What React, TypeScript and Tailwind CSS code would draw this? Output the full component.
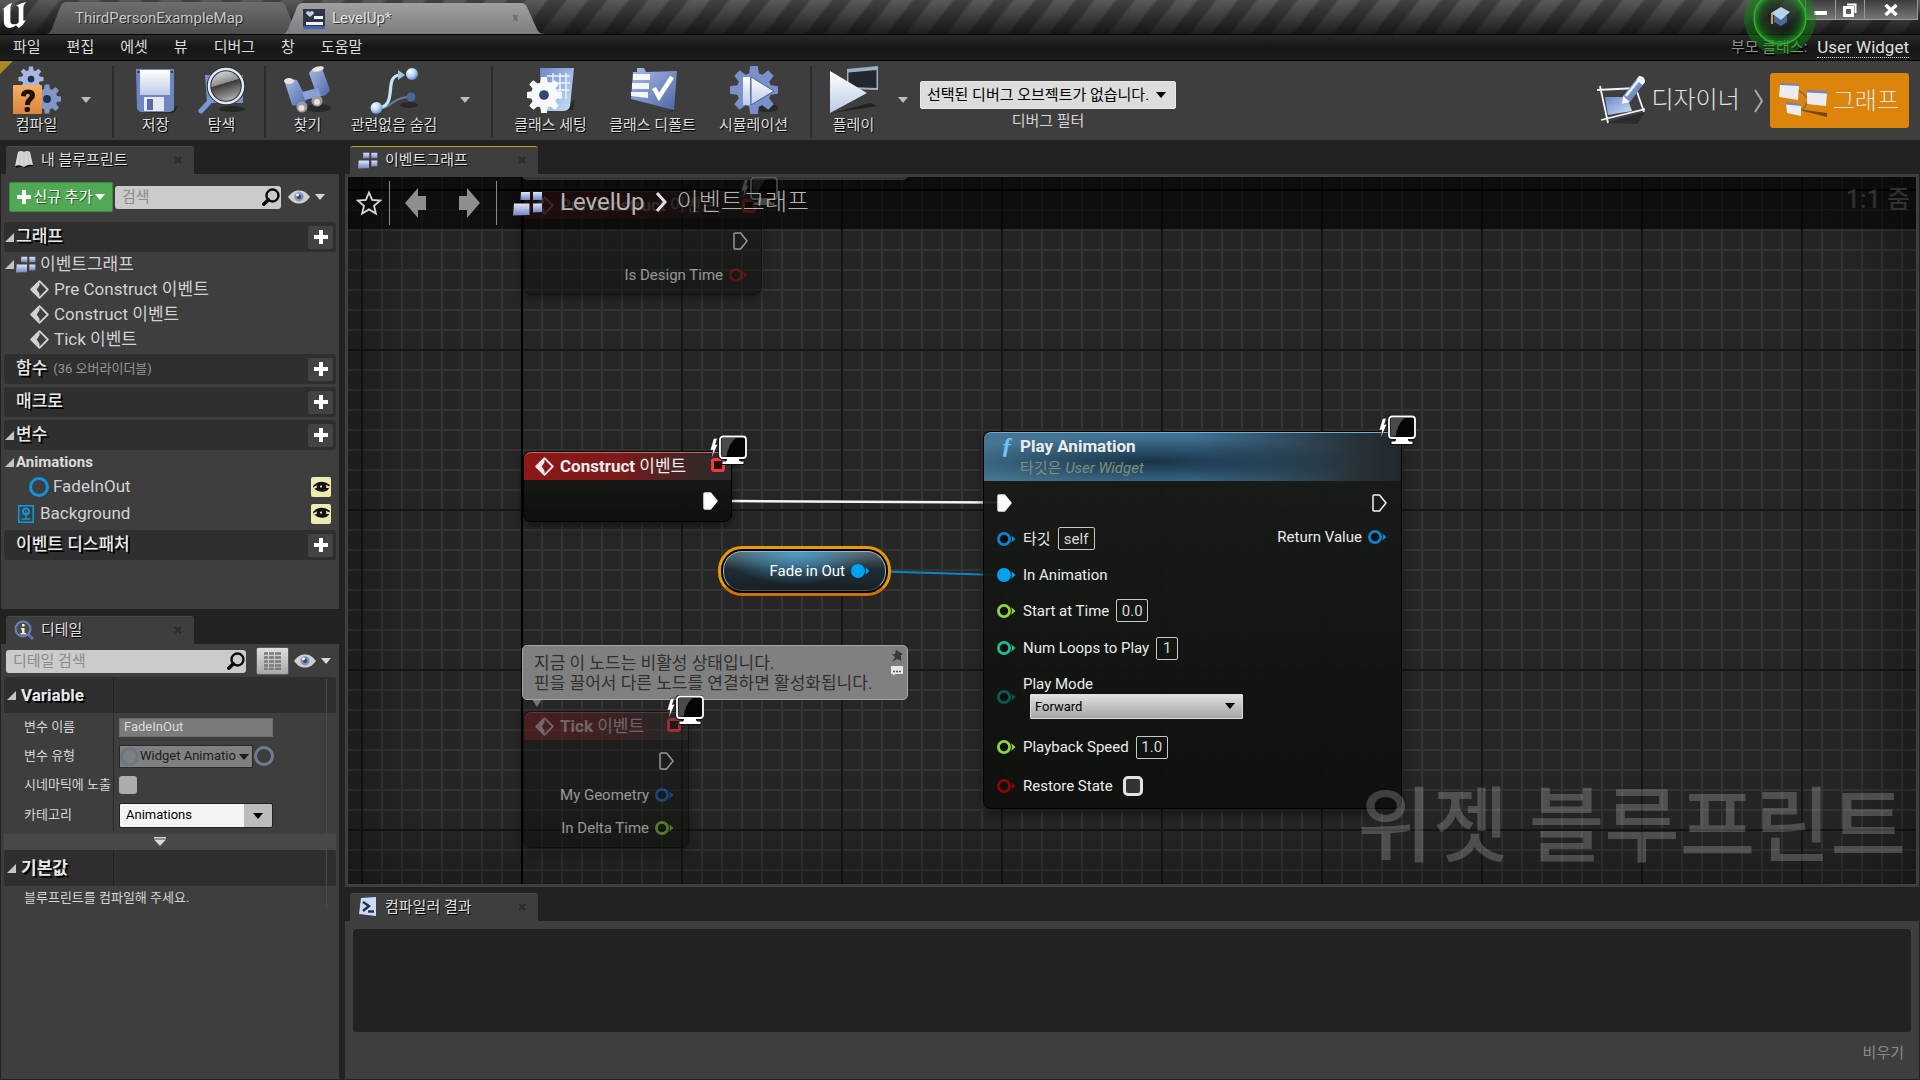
import type { ReactNode } from "react";
import { clsx } from "clsx";

/* ---------- small shared drawings ---------- */

const Caret = ({ className }: { className?: string }) => (
  <svg viewBox="0 0 12 7" className={clsx("h-[6px] w-[10px] shrink-0", className)} fill="currentColor">
    <path d="M0 0h12L6 7z" />
  </svg>
);

const Expander = ({ className }: { className?: string }) => (
  <svg viewBox="0 0 9 9" className={clsx("size-[9px] shrink-0 text-[#c4c4c4]", className)} fill="currentColor">
    <path d="M9 0v9H0z" />
  </svg>
);

const Plus = () => (
  <svg viewBox="0 0 14 14" className="size-[14px] shrink-0" fill="currentColor">
    <path d="M5 0h4v5h5v4H9v5H5V9H0V5h5z" />
  </svg>
);

const Magnifier = () => (
  <svg viewBox="0 0 18 18" className="size-[18px] shrink-0" fill="none" stroke="#0a0a0a">
    <circle cx="10.5" cy="7.5" r="6" strokeWidth="2.4" />
    <path d="M6.4 11.8 1.8 16.2" strokeWidth="3.6" strokeLinecap="round" />
  </svg>
);

const Eye = () => (
  <svg viewBox="0 0 22 14" className="h-[14px] w-[22px] shrink-0">
    <path d="M0 7C4 1.5 7.5 .5 11 .5S18 1.5 22 7c-4 5.5-7.5 6.5-11 6.5S4 12.5 0 7z" fill="#cfcfcf" />
    <circle cx="11" cy="6.8" r="4.6" fill="#7e93b8" />
    <circle cx="11" cy="6.8" r="2.2" fill="#34466c" />
    <circle cx="9.5" cy="4.8" r="1.6" fill="#e8eefa" />
  </svg>
);

const GraphIcon = ({ className }: { className?: string }) => (
  <svg viewBox="0 0 30 25" className={clsx("shrink-0", className)}>
    <defs>
      <linearGradient id="graphBlue" x1="0" y1="0" x2="0" y2="1">
        <stop offset="0" stopColor="#dfe6fa" />
        <stop offset="1" stopColor="#7484bd" />
      </linearGradient>
    </defs>
    <g fill="url(#graphBlue)">
      <path d="M8 1h9v8H7.5z" />
      <path d="M20 1h9v8h-9z" />
      <path d="M1 12.5h15.5V24L0 24.5z" />
      <path d="M20 12.5h9v8.5l-9 .5z" />
    </g>
  </svg>
);

const EventDiamond = () => (
  <svg viewBox="0 0 19 19" className="size-[19px] shrink-0" fill="none" stroke="currentColor">
    <path d="M9.5 1.2 17.8 9.5 9.5 17.8 1.2 9.5z" strokeWidth="1.8" strokeLinejoin="round" />
    <path d="M9.5 1.2 1.2 9.5l8.3 8.3v-4L6.8 9.5l2.7-4.3z" fill="currentColor" stroke="none" />
  </svg>
);

const ExecPin = ({ filled }: { filled?: boolean }) => (
  <svg viewBox="0 0 15 18" className="h-[18px] w-[15px] shrink-0">
    <path
      d="M2 1h5.5L14 9l-6.5 8H2q-1 0-1-1V2q0-1 1-1z"
      fill={filled ? "#fff" : "none"}
      stroke="#f2f2f2"
      strokeWidth="1.5"
      strokeLinejoin="round"
    />
  </svg>
);

const DataPin = ({ color, filled }: { color: string; filled?: boolean }) => (
  <svg viewBox="0 0 19 14" className="h-[14px] w-[19px] shrink-0">
    <circle cx="7" cy="7" r="5.6" fill={filled ? color : "#0b0f0d"} stroke={color} strokeWidth="2.8" />
    <path d="M14.3 3.2 18.5 7l-4.2 3.8q1.3-3.8 0-7.6z" fill={color} />
  </svg>
);

const Monitor = () => (
  <svg viewBox="0 0 38 33" className="h-[33px] w-[38px]">
    <path d="M4.5 4.5 8.5 4 6.5 10.5l2.5-.5L2.5 25l1.3-9L1 16.5z" fill="#fff" stroke="#111" strokeWidth=".6" />
    <rect x="9.5" y="1" width="28.5" height="25" rx="4" fill="#111" />
    <path d="M18 24h12l1 3h4v3.5H13V27h4z" fill="#fff" stroke="#111" />
    <rect x="11" y="2.5" width="26" height="21.5" rx="3" fill="#050505" stroke="#fff" strokeWidth="1.8" />
    <path d="M12.5 4h14Q19 11 17.5 22.5h-5z" fill="#4a4a4a" />
  </svg>
);

const Delegate = ({ className }: { className?: string }) => (
  <span className={clsx("block size-[14px] rounded-[3px] border-[3px] border-[#f0383a] bg-[#2a0708]", className)} />
);

const Gear = ({ cx, cy, r, fill, hole = "#20304f" }: { cx: number; cy: number; r: number; fill: string; hole?: string }) => (
  <g fill={fill}>
    {[0, 45, 90, 135].map((a) => (
      <path
        key={a}
        d={`M${cx - r * 0.16} ${cy - r}h${r * 0.32}l${r * 0.14} ${r}l${-r * 0.14} ${r}h${-r * 0.32}l${-r * 0.14} ${-r}z`}
        transform={`rotate(${a} ${cx} ${cy})`}
      />
    ))}
    <circle cx={cx} cy={cy} r={r * 0.72} />
    <circle cx={cx} cy={cy} r={r * 0.27} fill={hole} />
  </g>
);

/* ---------- toolbar drawings ---------- */

const Defs = () => (
  <svg className="absolute size-0" aria-hidden="true">
    <defs>
      <linearGradient id="steel" x1="0" y1="0" x2="1" y2="1">
        <stop offset="0" stopColor="#a9bce8" />
        <stop offset="1" stopColor="#4f66a3" />
      </linearGradient>
      <linearGradient id="pale" x1="0" y1="0" x2="0" y2="1">
        <stop offset="0" stopColor="#ffffff" />
        <stop offset="1" stopColor="#bccbe6" />
      </linearGradient>
      <linearGradient id="ice" x1="0" y1="0" x2="1" y2="1">
        <stop offset="0" stopColor="#6f86c9" />
        <stop offset="1" stopColor="#c9e6f7" />
      </linearGradient>
      <linearGradient id="orange" x1="0" y1="0" x2="0" y2="1">
        <stop offset="0" stopColor="#f7ad63" />
        <stop offset="1" stopColor="#d9853c" />
      </linearGradient>
      <linearGradient id="glass" x1="0" y1="0" x2=".3" y2="1">
        <stop offset="0" stopColor="#f4f4f4" />
        <stop offset=".5" stopColor="#8d8d8d" />
        <stop offset=".52" stopColor="#3a3a3a" />
        <stop offset="1" stopColor="#a9a9a9" />
      </linearGradient>
      <radialGradient id="ball" cx=".35" cy=".3" r=".8">
        <stop offset="0" stopColor="#ffffff" />
        <stop offset=".5" stopColor="#b5d8f5" />
        <stop offset="1" stopColor="#4c74b8" />
      </radialGradient>
    </defs>
  </svg>
);

const Drawing = ({ children }: { children: ReactNode }) => (
  <svg viewBox="0 0 48 48" className="size-12 shrink-0">
    {children}
  </svg>
);

const CompileDrawing = () => (
  <Drawing>
    <Gear cx={18} cy={13} r={12.5} fill="#a6b8e2" />
    <Gear cx={34} cy={33} r={14.5} fill="#8496c8" />
    <rect x="0" y="19" width="29" height="29" rx="1" fill="url(#orange)" />
    <path d="M8 30q0-6.5 7-6.5t7 6q0 3-3 5.2-2 1.5-2 4.3h-5q0-4.5 2.5-6.5 2.3-1.8 2.3-3 0-1.7-1.9-1.7-2 0-2.2 2.6z" fill="#1a1209" />
    <rect x="11.5" y="41" width="5.5" height="5" rx="2" fill="#1a1209" />
  </Drawing>
);

const SaveDrawing = () => (
  <Drawing>
    <path d="M30 44 46 40l-4 7H14z" fill="#1c1c1c" opacity=".6" />
    <path d="M4 3h38v41l-4 2H8l-3-3z" fill="#6f86bf" />
    <path d="M8 4h30v25H8z" fill="url(#pale)" />
    <path d="M12 31h20v14H12z" fill="#e4e8ef" />
    <path d="M15 33h6v11h-6z" fill="#566ca6" />
    <circle cx="6.5" cy="6" r="1" fill="#223" />
    <circle cx="40" cy="6" r="1" fill="#223" />
  </Drawing>
);

const BrowseDrawing = () => (
  <Drawing>
    <ellipse cx="34" cy="43" rx="13" ry="3" fill="#111" opacity=".5" />
    <path d="M7 9h38v28H9z" fill="#7c90c6" />
    <path d="M14 33 3 45" stroke="#7d96d6" strokeWidth="5" strokeLinecap="round" />
    <circle cx="28" cy="20" r="17" fill="url(#glass)" stroke="#2a2f3b" strokeWidth="4.5" />
    <circle cx="28" cy="20" r="17" fill="none" stroke="#e2e8f4" strokeWidth="2.5" />
  </Drawing>
);

const FindDrawing = () => (
  <Drawing>
    <ellipse cx="34" cy="42" rx="13" ry="4" fill="#111" opacity=".5" />
    <path d="M25 7q5-8 13-5l8 22q-4 8-13 6z" fill="url(#steel)" />
    <path d="M1 17q5-5 12-3l10 20q-6 8-15 5z" fill="url(#steel)" />
    <path d="M18 26 34 22l3 8-16 4z" fill="#8aa0d8" />
    <ellipse cx="5" cy="15" rx="5" ry="3" fill="#e9e3da" />
    <ellipse cx="34" cy="3" rx="6" ry="2.5" fill="#e9e3da" transform="rotate(-14 34 3)" />
    <circle cx="18" cy="41" r="5.5" fill="#9d99a0" />
    <circle cx="17.5" cy="42" r="3" fill="#e5e0d8" />
    <circle cx="33" cy="35" r="5.5" fill="#9d99a0" />
    <circle cx="33" cy="36" r="3" fill="#e5e0d8" />
  </Drawing>
);

const HideDrawing = () => (
  <Drawing>
    <ellipse cx="39" cy="39" rx="9" ry="3" fill="#111" opacity=".5" />
    <path d="M6 42c16 2 14-10 32-11" fill="none" stroke="#6b7b95" strokeWidth="2" />
    <path d="M6 42C30 42 12 10 30 9" fill="none" stroke="#c5e6f5" strokeWidth="3.2" />
    <path d="m28 4 7 5-7 5z" fill="#9fc4de" />
    <circle cx="42" cy="8" r="6" fill="url(#ball)" />
    <circle cx="6.5" cy="42" r="6" fill="url(#ball)" />
    <circle cx="41" cy="31" r="4.5" fill="#4a64a0" />
  </Drawing>
);

const SettingsDrawing = () => (
  <Drawing>
    <path d="M28 44h18l2-10z" fill="#111" opacity=".5" />
    <path d="M13 2h34l-4 38q-1 5-8 5H14z" fill="url(#ice)" />
    <path d="M20 10h23M20 17h23M19 24h23M26 7v26M33 7v26M39 7v26" stroke="#e8f3ff" strokeWidth="1.5" />
    <Gear cx={17} cy={29} r={18} fill="#f7f9fc" hole="#34466e" />
  </Drawing>
);

const DefaultsDrawing = () => (
  <Drawing>
    <path d="M2 36 40 47l6-3L38 46z" fill="#111" opacity=".5" />
    <path d="M8 2h7l2 4 31-1-3 39L2 33 4 6h4z" fill="url(#steel)" />
    <path d="M4 8h17v6H4zM3 17h17v6H3zM2 26h17v6L2 30z" fill="#f3f6fb" />
    <path d="m25 22 5 9L43 11" fill="none" stroke="#fff" strokeWidth="4.5" />
  </Drawing>
);

const SimulateDrawing = () => (
  <Drawing>
    <ellipse cx="36" cy="42" rx="13" ry="4" fill="#111" opacity=".5" />
    <Gear cx={24} cy={24} r={24} fill="#7b90cb" hole="#5d74b0" />
    <path d="M13 11h7v28h-7z" fill="url(#pale)" />
    <path d="M21 11l23 14-23 14z" fill="url(#pale)" stroke="#4a5f95" />
  </Drawing>
);

const PlayDrawing = () => (
  <Drawing>
    <path d="M2 47 48 40l-8-3z" fill="#111" opacity=".6" />
    <path d="M17 3 48 0v24l-31-1z" fill="#9bb0c8" />
    <path d="M18.5 6.5 46.5 4v18l-28-1z" fill="#23262c" />
    <path d="M0 5 37 27 0 47z" fill="url(#pale)" />
  </Drawing>
);

const DesignerDrawing = () => (
  <Drawing>
    <path d="M8 47 48 36l-8 12z" fill="#111" opacity=".4" />
    <path d="M8 21h22l5 14-24 4z" fill="url(#ice)" />
    <path d="M0 14 40 12M3 10l8 37M4 44l44-11M38 10l9 26" stroke="#f2f4f8" strokeWidth="1.8" />
    <path d="M42 0q6 0 6 6L33 26l-8 2 1-8z" fill="url(#steel)" />
    <path d="M42 0q6 0 6 6l-2.5 3-6-5zM26 20l7 6-8 2z" fill="#f5f8fd" />
    <path d="M29 20 41 5" stroke="#e6effc" strokeWidth="2.5" />
  </Drawing>
);

const GraphDrawing = () => (
  <Drawing>
    <g transform="translate(0 5)">
      <path d="M2 22 18 27l30 4v4L28 30z" fill="#5c3602" opacity=".8" />
      <path d="M18 8q8 4 10 8M18 30q8-2 10-10" fill="none" stroke="#8b6a3c" strokeWidth="1.5" />
      <path d="M1 2l19 1-1 15L0 15z" fill="#ececf0" />
      <path d="M1 1l19 1v2L1 3z" fill="#7485b4" />
      <path d="M28 9l20 1-1 14-19-2z" fill="#ececf0" />
      <path d="M28 8l20 1v2.5L28 10.5z" fill="#7485b4" />
      <path d="M7 21l15 2v11L8 31z" fill="#ececf0" />
      <path d="M7 20l15 2v2L7 22.5z" fill="#7485b4" />
    </g>
  </Drawing>
);

/* ---------- window frame ---------- */

const TabShape = ({ from, to }: { from: string; to: string }) => (
  <svg viewBox="0 0 264 32" preserveAspectRatio="none" className="absolute inset-0 size-full">
    <defs>
      <linearGradient id={`tab${from.slice(1)}`} x1="0" y1="0" x2="0" y2="1">
        <stop offset="0" stopColor={from} />
        <stop offset="1" stopColor={to} />
      </linearGradient>
    </defs>
    <path
      d="M0 32Q5 32 7 27L16 4q1.5-4 6-4H240q4.5 0 6 4l10 23q2 5 8 5z"
      fill={`url(#tab${from.slice(1)})`}
    />
  </svg>
);

const TitleBar = () => (
  <header className="relative flex h-[34px] items-end bg-[linear-gradient(to_bottom,#5a5a5a,#1e1e1e)]">
    <div className="absolute inset-0 bg-[repeating-linear-gradient(128deg,transparent_0px,transparent_14px,rgba(0,0,0,.28)_17px,rgba(0,0,0,.28)_29px,transparent_32px)]" />
    <svg viewBox="0 0 28 30" className="relative mb-1 ml-[2px] h-[28px] w-[26px]" fill="#fff">
      <path d="M1 8Q6 2 11 1 9 4 9 7v13q0 4 4 4 3 0 5-2V7q0-3-3-3 5-3 11-4-3 3-3 6v13q0 2 3 0-3 6-8 9l-3-3q-3 3-7 3-6 0-6-7V9q0-3-2-1z" />
    </svg>
    <button className="relative ml-[17px] flex h-[32px] w-[258px] items-center pl-[30px] text-[15px] text-[#c8c8c8] [text-shadow:1px_1px_0_#222]">
      <TabShape from="#6e6e6e" to="#4c4c4c" />
      <span className="relative">ThirdPersonExampleMap</span>
    </button>
    <button className="relative -ml-[22px] flex h-[31px] w-[264px] items-center gap-[7px] pr-[27px] pl-[22px] text-[15px] text-[#e4e4e4] [text-shadow:1px_1px_0_#333]">
      <TabShape from="#a0a0a0" to="#7d7d7d" />
      <svg viewBox="0 0 22 20" className="relative h-[20px] w-[22px]">
        <path d="M0 0h22v20H0z" fill="#2c3446" />
        <path d="M0 17h22v3H0z" fill="#3f63b0" />
        <path d="M7 8 3 4.5Q3 2 5 2t2 1.5Q7 2 9 2t2 2.5z" fill="#c9ced8" />
        <path d="M11 7h9v3h-9zM3 13h17v3H3z" fill="#eef1f6" />
      </svg>
      <span className="relative grow text-left">LevelUp*</span>
      <span className="relative text-[11px] font-bold text-[#686868] [text-shadow:none]">x</span>
    </button>
    <div className="relative mr-[2px] ml-auto flex self-start border border-t-0 border-[#999] bg-[linear-gradient(to_bottom,#3c3c3c,#777)]">
      <button aria-label="minimize" className="flex h-[19px] w-[30px] items-center justify-center border-r border-[#999]">
        <span className="mt-[6px] h-[4px] w-[13px] bg-white" />
      </button>
      <button aria-label="restore" className="flex h-[19px] w-[29px] items-center justify-center border-r border-[#999]">
        <svg viewBox="0 0 14 14" className="size-[14px]" fill="none" stroke="#fff">
          <path d="M4 1.5h8.5v8.5" strokeWidth="2" />
          <rect x="1.5" y="4.5" width="8" height="8" strokeWidth="3" />
        </svg>
      </button>
      <button aria-label="close" className="flex h-[19px] w-[52px] items-center justify-center">
        <svg viewBox="0 0 14 12" className="h-[12px] w-[14px]" stroke="#fff" strokeWidth="3.5">
          <path d="M1.5 1l11 10M12.5 1l-11 10" />
        </svg>
      </button>
    </div>
    <svg viewBox="0 0 72 72" className="absolute -top-[18px] right-[104px] z-10 size-[72px]">
      <defs>
        <radialGradient id="glow">
          <stop offset=".4" stopColor="#0c1a0c" stopOpacity=".35" />
          <stop offset=".75" stopColor="#105c12" stopOpacity=".55" />
          <stop offset="1" stopColor="#1fa51f" stopOpacity=".8" />
        </radialGradient>
      </defs>
      <path d="M36 0a36 36 0 1 0 .01 0zM36 10a26 26 0 1 1-.01 0z" fillRule="evenodd" fill="#0f8a12" opacity=".45" />
      <circle cx="36" cy="36" r="26" fill="url(#glow)" stroke="#29b229" strokeWidth="1.5" />
      <path d="M30 34v6l7 4 6-4v-6z" fill="#4c6893" />
      <path d="M27 31 37 25l9 5-9 8z" fill="#b4d2ee" />
      <path d="M28 31v11" stroke="#c79a63" strokeWidth="2" />
    </svg>
  </header>
);

const menus = ["파일", "편집", "에셋", "뷰", "디버그", "창", "도움말"];

const MenuBar = () => (
  <nav className="flex h-[27px] items-center border-y border-black bg-[linear-gradient(to_bottom,#2a2a2a,#161616_50%,#1d1d1d)] text-[15px] text-[#dcdcdc]">
    {menus.map((menu) => (
      <button key={menu} className="px-[13px]">
        {menu}
      </button>
    ))}
    <span className="ml-auto pr-[10px] text-[#8f8f8f] [text-shadow:1px_2px_0_#000]">부모 클래스:</span>
    <a href="#parent" className="mr-[11px] border-b border-dotted border-[#ddd] text-[17px] leading-[20px] text-[#e0e0e0]">
      User Widget
    </a>
  </nav>
);

const ToolButton = ({ label, icon, width = "w-[65px]" }: { label: string; icon: ReactNode; width?: string }) => (
  <button className={clsx("flex flex-col items-center text-[15px] leading-[22px] text-[#dedede]", width)}>
    {icon}
    <span className="whitespace-nowrap [text-shadow:1px_1px_0_#000]">{label}</span>
  </button>
);

const ToolMenu = ({ label }: { label: string }) => (
  <button aria-label={label} className="flex w-[34px] items-center justify-center pb-[6px] text-[#bdbdbd]">
    <Caret />
  </button>
);

const Separator = () => <span className="mx-[9px] mb-[3px] w-[2px] bg-[#2c2c2c]" />;

const Toolbar = () => (
  <div className="relative flex h-[79px] bg-[#3e3e3e] pt-[2px] pl-1">
    <svg viewBox="0 0 14 14" className="absolute top-0 left-0 size-[13px]">
      <path d="M0 0h14L0 14z" fill="#a98a1e" />
    </svg>
    <div className="flex pt-[3px]">
      <ToolButton label="컴파일" icon={<CompileDrawing />} />
      <ToolMenu label="컴파일 옵션" />
      <Separator />
      <ToolButton label="저장" icon={<SaveDrawing />} />
      <ToolButton label="탐색" icon={<BrowseDrawing />} width="w-[67px]" />
      <Separator />
      <ToolButton label="찾기" icon={<FindDrawing />} />
      <ToolButton label="관련없음 숨김" icon={<HideDrawing />} width="w-[108px]" />
      <ToolMenu label="숨김 옵션" />
      <Separator />
      <ToolButton label="클래스 세팅" icon={<SettingsDrawing />} width="w-[97px]" />
      <ToolButton label="클래스 디폴트" icon={<DefaultsDrawing />} width="w-[107px]" />
      <ToolButton label="시뮬레이션" icon={<SimulateDrawing />} width="w-[95px]" />
      <Separator />
      <ToolButton label="플레이" icon={<PlayDrawing />} />
      <ToolMenu label="플레이 옵션" />
    </div>
    <div className="flex flex-col items-center pt-[18px] text-[15px]">
      <div className="relative">
        <select
          id="debug"
          className="h-[28px] w-[256px] appearance-none rounded-[2px] border border-[#e8e8e8] bg-[#dcdcdc] pl-[6px] text-black"
        >
          <option>선택된 디버그 오브젝트가 없습니다.</option>
        </select>
        <Caret className="pointer-events-none absolute top-[11px] right-[10px] text-black" />
      </div>
      <label htmlFor="debug" className="leading-[24px] text-[#d4d4d4]">
        디버그 필터
      </label>
    </div>
    <div className="mr-[11px] ml-auto flex items-center pb-[2px] text-2xl font-light text-[#e2e2e2]">
      <button className="flex items-center gap-[6px] pb-[2px]">
        <DesignerDrawing />
        디자이너
      </button>
      <svg viewBox="0 0 10 24" className="mr-[6px] ml-[14px] h-6 w-[10px]" fill="none" stroke="#a8a8a8" strokeWidth="2">
        <path d="M1 1l7 11-7 11" />
      </svg>
      <button className="flex h-[55px] items-center gap-[6px] rounded-[3px] bg-[#dc840c] pr-[10px] pl-[9px]">
        <GraphDrawing />
        그래프
      </button>
    </div>
  </div>
);

/* ---------- docked panels ---------- */

const DockTab = ({ icon, title, active }: { icon: ReactNode; title: string; active?: boolean }) => (
  <div className="flex h-[34px] items-end bg-[#222] pl-[5px]">
    <button
      className={clsx(
        "flex h-[28px] w-[188px] items-center rounded-t-[3px] border-t bg-[#3e3e3e] pr-3 pb-px pl-[7px] text-[15px] text-[#e0e0e0] [text-shadow:1px_1px_0_#000]",
        active ? "border-[#b8a019]" : "border-[#484848]"
      )}
    >
      <span className="flex w-[21px] justify-center">{icon}</span>
      <span className="ml-[7px] grow text-left">{title}</span>
      <svg viewBox="0 0 8 8" className="size-[8px]" stroke="#2c2c2c" strokeWidth="2">
        <path d="M1 1l6 6M7 1 1 7" />
      </svg>
    </button>
  </div>
);

const Category = ({ title, note, open, flush }: { title: string; note?: string; open?: boolean; flush?: boolean }) => (
  <div
    className={clsx(
      "flex h-[30px] items-center rounded-[3px] bg-[#2f2f2f] pr-[3px] pl-px",
      !flush && "mb-[3px]"
    )}
  >
    <span className="w-[11px]">{open && <Expander />}</span>
    <span className="text-[17px] font-medium text-[#e8e8e8] [text-shadow:2px_2px_0_#000]">{title}</span>
    {note && <span className="ml-[6px] text-[13px] text-[#969696]">{note}</span>}
    <button
      aria-label={`${title} 추가`}
      className="ml-auto flex h-[23px] w-[25px] items-center justify-center rounded-[2px] bg-[#434343] text-white"
    >
      <Plus />
    </button>
  </div>
);

const SearchBox = ({ id, hint }: { id: string; hint: string }) => (
  <div className="flex h-[23px] min-w-0 flex-1 items-center rounded-[3px] bg-[#cbcbcb] pr-px pl-[7px]">
    <input
      id={id}
      aria-label={hint}
      placeholder={hint}
      className="min-w-0 flex-1 bg-transparent text-[15px] leading-[22px] outline-none placeholder:text-[#8a8a8a]"
    />
    <Magnifier />
  </div>
);

const ViewOptions = () => (
  <button aria-label="보기 옵션" className="flex items-center gap-[5px] text-[#d8d8d8]">
    <Eye />
    <Caret />
  </button>
);

const ExposeToggle = ({ label }: { label: string }) => (
  <button aria-label={label} className="mr-[5px] ml-auto flex size-[20px] items-center justify-center rounded-[2px] bg-[#eeebb2]">
    <svg viewBox="0 0 18 14" className="h-[13px] w-[17px]">
      <path d="M0 5q8-8 18-1l-.5 2q-2-1.500-4-2 1 1.500.5 3.500 2 .5 3.500-.5-2 5-8.500 4.500Q4 11 1 8l3-.5Q3.500 6 4.500 4.500 3 5 0 7z" fill="#111" />
      <circle cx="8.500" cy="6" r="1.200" fill="#eeebb2" />
    </svg>
  </button>
);

const events = ["Pre Construct 이벤트", "Construct 이벤트", "Tick 이벤트"];

const MyBlueprint = () => (
  <section className="flex min-h-0 flex-1 flex-col">
    <DockTab
      title="내 블루프린트"
      icon={
        <svg viewBox="0 0 20 18" className="h-[18px] w-[20px]">
          <path d="M2 17q7-3 9 0 4-2 8-2v-3H1z" fill="#111" />
          <path d="M4 1q3-2 6 0 3-2 6 0l3 13q-5-1-9 2-4-3-9-1z" fill="#d8d8d8" />
          <path d="M10 1v14M7 1 5.5 14M13.5 1l1.5 13" stroke="#b4b4b4" strokeWidth=".6" />
        </svg>
      }
    />
    <div className="flex-1 overflow-hidden bg-[#3e3e3e] px-[3px]">
      <div className="mt-2 mb-[10px] flex items-center pr-[11px] pl-[5px]">
        <button className="mr-[2px] flex h-[30px] w-[104px] items-center justify-center gap-[3px] rounded-[2px] border border-[#3c8a40] bg-[#52a955] text-[15px] whitespace-nowrap text-white [text-shadow:1px_1px_0_#2a5c2c]">
          <Plus />
          신규 추가
          <Caret />
        </button>
        <SearchBox id="blueprint-search" hint="검색" />
        <span className="ml-[7px]">
          <ViewOptions />
        </span>
      </div>
      <Category title="그래프" open flush />
      <div className="mb-[2px] text-[17px] leading-[25px] text-[#d2d2d2]">
        <div className="flex items-center pl-px">
          <Expander />
          <GraphIcon className="mr-[4px] ml-[2px] h-[17px] w-[20px]" />
          이벤트그래프
        </div>
        {events.map((name) => (
          <div key={name} className="flex items-center gap-[5px] pl-[26px]">
            <EventDiamond />
            {name}
          </div>
        ))}
      </div>
      <Category title="함수" note="(36 오버라이더블)" />
      <Category title="매크로" />
      <Category title="변수" open flush />
      <div className="mb-[3px] text-[17px] text-[#d2d2d2]">
        <div className="flex h-[24px] items-center gap-[2px] pl-px text-[15px] font-bold text-[#dcdcdc]">
          <Expander />
          Animations
        </div>
        <div className="flex h-[26px] items-center gap-[4px] pl-[25px]">
          <span className="size-[20px] rounded-full border-[3px] border-[#0f95dc]" />
          FadeInOut
          <ExposeToggle label="FadeInOut 노출" />
        </div>
        <div className="flex h-[27px] items-center gap-[6px] pl-[14px]">
          <svg viewBox="0 0 16 18" className="h-[18px] w-[16px]" fill="none" stroke="#0f95dc">
            <rect x=".8" y=".8" width="14.4" height="16.4" strokeWidth="1.6" />
            <circle cx="8" cy="6.5" r="3" strokeWidth="2" />
            <path d="M8 6v8M3.5 14h9" strokeWidth="1.4" />
          </svg>
          Background
          <ExposeToggle label="Background 노출" />
        </div>
      </div>
      <Category title="이벤트 디스패처" />
    </div>
  </section>
);

const DetailRow = ({ label, id, height, children }: { label: string; id: string; height: string; children: ReactNode }) => (
  <div className={clsx("flex items-center", height)}>
    <label htmlFor={id} className="w-[109px] shrink-0 overflow-hidden pl-[20px] whitespace-nowrap">
      {label}
    </label>
    <div className="flex h-full flex-1 items-center border-l border-[#2a2a2a] pl-[5px]">{children}</div>
  </div>
);

const DetailHeader = ({ title }: { title: string }) => (
  <div className="flex h-[36px] items-center rounded-t-[3px] bg-[#2f2f2f]">
    <div className="flex h-full w-[109px] items-center gap-[5px] pl-[3px] text-[17px] font-bold text-[#e8e8e8] [text-shadow:2px_2px_0_#000]">
      <Expander />
      {title}
    </div>
    <div className="h-full border-l border-[#222]" />
  </div>
);

const Details = () => (
  <section className="flex min-h-0 flex-1 flex-col">
    <DockTab
      title="디테일"
      icon={
        <svg viewBox="0 0 20 20" className="size-[20px]">
          <path d="M14 14l5 5" stroke="#5470b8" strokeWidth="3" />
          <circle cx="9" cy="9" r="7.5" fill="#4a4a4a" stroke="#6a80b8" strokeWidth="2" />
          <path d="M7 8h3.5v5H12v1.5H6.5V13H8V9.5H7zM8 4h2.5v2.5H8z" fill="#eee" />
        </svg>
      }
    />
    <div className="flex-1 overflow-hidden bg-[#3e3e3e] px-[3px]">
      <div className="mb-[2px] flex items-center pt-[3px] pr-[5px] pl-[2px]">
        <SearchBox id="details-search" hint="디테일 검색" />
        <button
          aria-label="속성 매트릭스"
          className="mr-[5px] ml-[10px] flex h-[28px] w-[33px] items-center justify-center rounded-[2px] border border-[#5a5a5a] bg-[linear-gradient(to_bottom,#dedede,#a8a8a8)]"
        >
          <svg viewBox="0 0 17 18" className="h-[18px] w-[17px]" stroke="#7a7a7a" strokeWidth="2.4">
            <path d="M0 1.500h17M0 5.500h17M0 9.500h17M0 13.500h17M0 17h17" strokeDasharray="4 1 5 1 6 0" />
          </svg>
        </button>
        <ViewOptions />
      </div>
      <div className="relative text-[13px] leading-[20px] text-[#d6d6d6]">
        <span className="absolute inset-y-[2px] right-[9px] w-px bg-[#4a4a4a]" />
        <DetailHeader title="Variable" />
        <DetailRow label="변수 이름" id="var-name" height="h-[28px]">
          <input
            id="var-name"
            defaultValue="FadeInOut"
            className="h-[19px] w-[154px] border border-[#6c6c6c] bg-[#7b7b7b] pl-1 text-[#dcdcdc]"
          />
        </DetailRow>
        <DetailRow label="변수 유형" id="var-type" height="h-[30px]">
          <div className="relative">
            <select
              id="var-type"
              disabled
              className="h-[23px] w-[134px] appearance-none border border-[#2a2a2a] bg-[#808080] pr-[16px] pl-[20px] text-[13px] text-[#1c1c1c] opacity-100"
            >
              <option>Widget Animation</option>
            </select>
            <span className="absolute top-[2px] left-px size-[19px] rounded-full border-[3px] border-[#6a7789]" />
            <Caret className="pointer-events-none absolute top-[9px] right-1 text-[#1c1c1c]" />
          </div>
          <span className="ml-px size-[20px] rounded-full border-[3px] border-[#6d7c93]" />
        </DetailRow>
        <DetailRow label="시네마틱에 노출" id="cinematics" height="h-[28px]">
          <input id="cinematics" type="checkbox" className="size-[18px] appearance-none rounded-[3px] bg-[#acacac]" />
        </DetailRow>
        <DetailRow label="카테고리" id="category" height="h-[32px]">
          <div className="relative">
            <select
              id="category"
              className="h-[25px] w-[154px] appearance-none rounded-[2px] border border-[#222] bg-[linear-gradient(to_right,#f4f4f4_124px,#bcbcbc_124px)] pl-[6px] text-black"
            >
              <option>Animations</option>
            </select>
            <Caret className="pointer-events-none absolute top-[10px] right-[10px] text-black" />
          </div>
        </DetailRow>
        <button aria-label="고급 표시" className="mt-[3px] flex h-[16px] w-full justify-center bg-[#484848] pt-[3px] pr-[20px]">
          <svg viewBox="0 0 12 9" className="h-[9px] w-[12px]" fill="#d8d8d8">
            <path d="M0 0h12v1.5H0zM0 2.5h12L6 9z" />
          </svg>
        </button>
        <DetailHeader title="기본값" />
        <p className="pl-[20px] leading-[24px]">블루프린트를 컴파일해 주세요.</p>
      </div>
    </div>
  </section>
);

/* ---------- graph ---------- */

const nodeBody =
  "absolute rounded-[8px] border border-black bg-[linear-gradient(to_bottom,rgba(24,27,24,.92),rgba(12,15,12,.92))] shadow-[0_4px_8px_rgba(0,0,0,.5)]";

type EventNodeProps = {
  name: string;
  className: string;
  muted?: boolean;
  children: ReactNode;
};

const EventNode = ({ name, className, muted, children }: EventNodeProps) => (
  <article className={clsx(nodeBody, className)}>
    <h3
      className={clsx(
        "flex h-[28px] items-center gap-[6px] rounded-t-[7px] border-t pl-[11px] text-[17px] font-bold",
        muted
          ? "border-[#7a4a4a] bg-[linear-gradient(to_right,#661a1a,#551c1c_45%,#352424_80%,#2b2b2b)] text-[#a89a9a]"
          : "border-[#c96a6a] bg-[linear-gradient(to_right,#8f1717,#7c1a1a_45%,#3c2626_80%,#2b2b2b)] text-[#ececec]"
      )}
    >
      <EventDiamond />
      <span>
        {name} <span className="font-normal">이벤트</span>
      </span>
    </h3>
    {children}
  </article>
);

const OutPin = ({ label, color }: { label: string; color: string }) => (
  <div className="flex items-center justify-end gap-[6px]">
    {label}
    <DataPin color={color} />
  </div>
);

const ValuePin = ({ label, color, value, id, width }: { label: string; color: string; value: string; id: string; width: string }) => (
  <div className="flex items-center gap-[7px]">
    <DataPin color={color} />
    <label htmlFor={id}>{label}</label>
    <input
      id={id}
      defaultValue={value}
      className={clsx("h-[23px] rounded-[2px] border border-[#c8c8c8] bg-transparent text-center text-[#d8d8d8]", width)}
    />
  </div>
);

const PlayAnimationNode = () => (
  <article className={clsx(nodeBody, "top-[254px] left-[635px] w-[419px] pb-[6px] text-[15px] text-[#ececec]")}>
    <div className="flex h-[49px] gap-[4px] rounded-t-[7px] border-t border-[#6fb0da] bg-[radial-gradient(ellipse_at_40%_60%,rgba(10,30,45,.75),transparent_60%),linear-gradient(to_right,#447592,#3f7093_50%,#28343b_88%,#22282a)] pl-[14px]">
      <span className="w-[18px] pt-px text-center font-['Liberation_Serif',serif] text-[24px] leading-[22px] font-bold text-[#6fc3f5] italic">
        ƒ
      </span>
      <div className="pt-[2px]">
        <h3 className="text-[17px] leading-[22px] font-bold">Play Animation</h3>
        <p className="text-[15px] leading-[22px] text-[#7f8f78]">
          타깃은 <i>User Widget</i>
        </p>
      </div>
    </div>
    <div className="flex h-[44px] items-center justify-between pr-[14px] pl-[13px]">
      <ExecPin filled />
      <ExecPin />
    </div>
    <div className="flex justify-between pr-[14px] pl-[13px]">
      <div className="flex flex-col leading-[22px]">
        <div className="flex h-[27px] items-center">
          <ValuePin label="타깃" color="#0a84cf" value="self" id="target" width="w-[37px]" />
        </div>
        <div className="flex h-[46px] items-center gap-[7px]">
          <DataPin color="#00a2f2" filled />
          In Animation
        </div>
        <div className="flex h-[25px] items-center">
          <ValuePin label="Start at Time" color="#8fd63a" value="0.0" id="start" width="w-[32px]" />
        </div>
        <div className="mt-[7px] flex h-[36px] items-center">
          <ValuePin label="Num Loops to Play" color="#1fbd8f" value="1" id="loops" width="w-[22px]" />
        </div>
        <div className="mt-2 flex items-center gap-[7px]">
          <DataPin color="#0a5a50" />
          <div className="flex flex-col">
            <label htmlFor="mode" className="leading-[20px]">
              Play Mode
            </label>
            <div className="relative ml-[7px]">
              <select
                id="mode"
                className="block h-[25px] w-[213px] appearance-none rounded-[1px] border border-[#ddd] bg-[linear-gradient(to_bottom,#e0e0e0,#a4a4a4)] pl-1 text-[13px] text-black"
              >
                <option>Forward</option>
              </select>
              <Caret className="pointer-events-none absolute top-[9px] right-[8px] text-black" />
            </div>
          </div>
        </div>
        <div className="mt-3 flex h-[32px] items-center">
          <ValuePin label="Playback Speed" color="#8fd63a" value="1.0" id="speed" width="w-[32px]" />
        </div>
        <div className="mt-[7px] flex h-[32px] items-center gap-[7px]">
          <DataPin color="#8a0508" />
          <label htmlFor="restore">Restore State</label>
          <input
            id="restore"
            type="checkbox"
            className="ml-[3px] size-[20px] appearance-none rounded-[5px] border-[3px] border-[#e2e2e2] bg-[#333]"
          />
        </div>
      </div>
      <div className="pt-px leading-[22px]">
        <OutPin label="Return Value" color="#0a84cf" />
      </div>
    </div>
    <div className="absolute -top-[18px] -right-[15px]">
      <Monitor />
    </div>
  </article>
);

const GraphCanvas = () => (
  <div className="relative flex-1 overflow-hidden border-[3px] border-[#3e3e3e] bg-[#262626]">
    <div className="absolute inset-0 bg-[linear-gradient(to_right,#343434_2px,transparent_2px),linear-gradient(to_bottom,#343434_2px,transparent_2px)] bg-[length:20px_20px] bg-[position:13px_12px]" />
    <div className="absolute inset-0 bg-[linear-gradient(to_right,#161616_2px,transparent_2px),linear-gradient(to_bottom,#161616_2px,transparent_2px)] bg-[length:160px_160px] bg-[position:13px_12px]" />
    <div className="absolute inset-y-0 left-[173px] w-[2px] bg-black" />
    <div className="absolute inset-x-0 top-[12px] h-[2px] bg-black" />
    <div className="absolute inset-0 shadow-[inset_0_0_90px_rgba(0,0,0,.5)]" />

    {/* disabled Pre Construct, partly under the breadcrumb bar */}
    <div className="absolute -top-[50px] left-[174px] h-[53px] w-[386px] rounded-[5px] bg-[#8a8a8a] opacity-80" />
    <div className="opacity-55">
      <EventNode name="Pre Construct" muted className="top-[13px] left-[175px] w-[239px] pb-[8px]">
        <div className="flex flex-col pt-[13px] pr-[13px] text-[15px] leading-[22px] text-[#f0f0f0]">
          <div className="mb-[14px] flex justify-end">
            <ExecPin />
          </div>
          <OutPin label="Is Design Time" color="#8a0508" />
        </div>
        <Delegate className="absolute top-[8px] right-[5px]" />
      </EventNode>
      <div className="absolute -top-[2px] left-[392px]">
        <Monitor />
      </div>
    </div>

    <svg className="absolute inset-0 size-full" fill="none">
      <path d="M384 324 650 325.5" stroke="#f4f4f4" strokeWidth="2.5" />
      <path d="M520 394 650 398" stroke="#0d86c9" strokeWidth="2" />
    </svg>

    <EventNode name="Construct" className="top-[274px] left-[175px] w-[209px] pb-[10px]">
      <div className="flex justify-end pt-[12px] pr-[13px] pb-[1px]">
        <ExecPin filled />
      </div>
      <Delegate className="absolute top-[6px] right-[6px]" />
      <div className="absolute -top-[18px] -right-[16px]">
        <Monitor />
      </div>
    </EventNode>

    <article className="absolute top-[369px] left-[370px] rounded-[24px] border-[3px] border-[#e89a06] border-b-[#d26f05] bg-black p-[2px]">
      <div className="flex h-[40px] w-[163px] items-center justify-end gap-[6px] rounded-[19px] border border-[#9fb6c2] border-b-[#555] bg-[radial-gradient(ellipse_at_45%_0%,#4c9cc8,transparent_60%),linear-gradient(to_bottom,#5b686e,#1d2c34_45%,#1a2023)] pr-[15px] text-[15px] text-white">
        Fade in Out
        <DataPin color="#00a2f2" filled />
      </div>
    </article>

    <PlayAnimationNode />

    <svg viewBox="0 0 10 8" className="absolute top-[522px] left-[184px] h-[8px] w-[10px]" fill="#777">
      <path d="M0 0h10L5 8z" />
    </svg>
    <div className="absolute top-[468px] left-[174px] flex w-[386px] justify-between rounded-[5px] border border-[#a5a5a5] bg-[#858585]/95 pt-[7px] pr-[4px] pb-[6px] pl-[11px] text-[17px] leading-[20px] text-[#303030]">
      <p>
        지금 이 노드는 비활성 상태입니다.
        <br />
        핀을 끌어서 다른 노드를 연결하면 활성화됩니다.
      </p>
      <svg viewBox="0 0 12 28" className="-mt-[3px] h-[28px] w-[12px] shrink-0">
        <path d="M5 0l7 4-2 1 0 4 1 2-5-2-5 3 3-5-3-3 3 0z" fill="#3a3a3a" />
        <path d="M0 16h12v8H4l-1 2-1-2H0z" fill="#e2eaf0" />
        <path d="M2 21.5h2M5 21.5h2M8 21.5h2" stroke="#555" strokeWidth="1.5" />
      </svg>
    </div>

    <div className="opacity-55">
      <EventNode name="Tick" muted className="top-[534px] left-[175px] w-[166px] pb-[8px]">
        <div className="flex flex-col pt-[12px] pr-[14px] text-[15px] leading-[22px] text-[#f0f0f0]">
          <div className="mb-[14px] flex justify-end">
            <ExecPin />
          </div>
          <OutPin label="My Geometry" color="#0f5fbf" />
          <div className="mt-[11px]">
            <OutPin label="In Delta Time" color="#7fc032" />
          </div>
        </div>
        <Delegate className="absolute top-[6px] right-[7px]" />
      </EventNode>
    </div>
    <div className="absolute top-[517px] left-[318px]">
      <Monitor />
    </div>

    {/* breadcrumb bar */}
    <div className="absolute inset-x-0 top-0 flex h-[52px] items-center bg-black/55 text-2xl">
      <button aria-label="즐겨찾기" className="flex w-[41px] justify-center">
        <svg viewBox="0 0 26 26" className="size-[26px]" fill="none" stroke="#d8d8d8" strokeWidth="1.8">
          <path d="M13 2.5l3.1 7.4 8 .7-6.1 5.2 1.9 7.8L13 19.4l-6.9 4.2L8 15.8l-6.1-5.2 8-.7z" />
        </svg>
      </button>
      <span className="h-[44px] w-px bg-[#8a8a8a]" />
      <button aria-label="뒤로" className="flex w-[52px] justify-center text-[#8e8e8e]">
        <svg viewBox="0 0 22 30" className="h-[30px] w-[22px]" fill="currentColor">
          <path d="M0 15 13 0v8h8v14h-8v8z" />
        </svg>
      </button>
      <button aria-label="앞으로" className="flex w-[54px] justify-center text-[#8e8e8e]">
        <svg viewBox="0 0 22 30" className="h-[30px] w-[22px]" fill="currentColor">
          <path d="M22 15 9 0v8H1v14h8v8z" />
        </svg>
      </button>
      <span className="h-[44px] w-px bg-[#8a8a8a]" />
      <GraphIcon className="mr-[17px] ml-[16px] h-[25px] w-[30px]" />
      <div className="flex items-center pb-[2px]">
        <a href="#levelup" className="text-[#b4b4b4]">
          LevelUp
        </a>
        <svg viewBox="0 0 12 20" className="mx-[10px] h-5 w-3" fill="none" stroke="#e0e0e0" strokeWidth="3">
          <path d="M2 1l8 9-8 9" />
        </svg>
        <span className="font-light text-[#b4b4b4]">이벤트그래프</span>
      </div>
      <span className="mr-[6px] ml-auto pb-[6px] text-[25px] font-medium text-[#303030]">1:1 줌</span>
    </div>

    <p className="pointer-events-none absolute right-[10px] bottom-[11px] text-[82px] leading-[92px] font-medium text-white/20">
      위젯 블루프린트
    </p>
  </div>
);

const CompilerResults = () => (
  <section>
    <DockTab
      title="컴파일러 결과"
      icon={
        <svg viewBox="0 0 18 20" className="h-[20px] w-[18px]">
          <path d="M2 1l15-1v19L0 17z" fill="#c9dbf7" />
          <path d="M4 5l6 4-6 5" fill="none" stroke="#25304a" strokeWidth="2.4" />
          <path d="M9 14.5h6" stroke="#25304a" strokeWidth="2.4" />
        </svg>
      }
    />
    <div className="flex flex-col bg-[#3e3e3e] px-2 pt-[8px]">
      <div className="h-[103px] rounded-[3px] bg-[#222]" />
      <button className="mt-[10px] mb-[15px] self-end pr-[7px] text-[15px] leading-[22px] text-[#8a8a8a]">비우기</button>
    </div>
  </section>
);

const App = () => {
  return (
    <div className="flex h-screen min-h-[900px] flex-col overflow-hidden bg-[#222] font-[Roboto,'Noto_Sans_CJK_KR',sans-serif]">
      <Defs />
      <TitleBar />
      <MenuBar />
      <Toolbar />
      <main className="flex min-h-0 flex-1 pb-px">
        <div className="flex w-[344px] shrink-0 flex-col gap-px pr-[5px] pl-px">
          <MyBlueprint />
          <Details />
        </div>
        <div className="flex min-w-0 flex-1 flex-col pr-px pl-px">
          <section className="flex min-h-0 flex-1 flex-col">
            <DockTab title="이벤트그래프" active icon={<GraphIcon className="h-[17px] w-[20px]" />} />
            <GraphCanvas />
          </section>
          <CompilerResults />
        </div>
      </main>
    </div>
  );
};

export default App;
